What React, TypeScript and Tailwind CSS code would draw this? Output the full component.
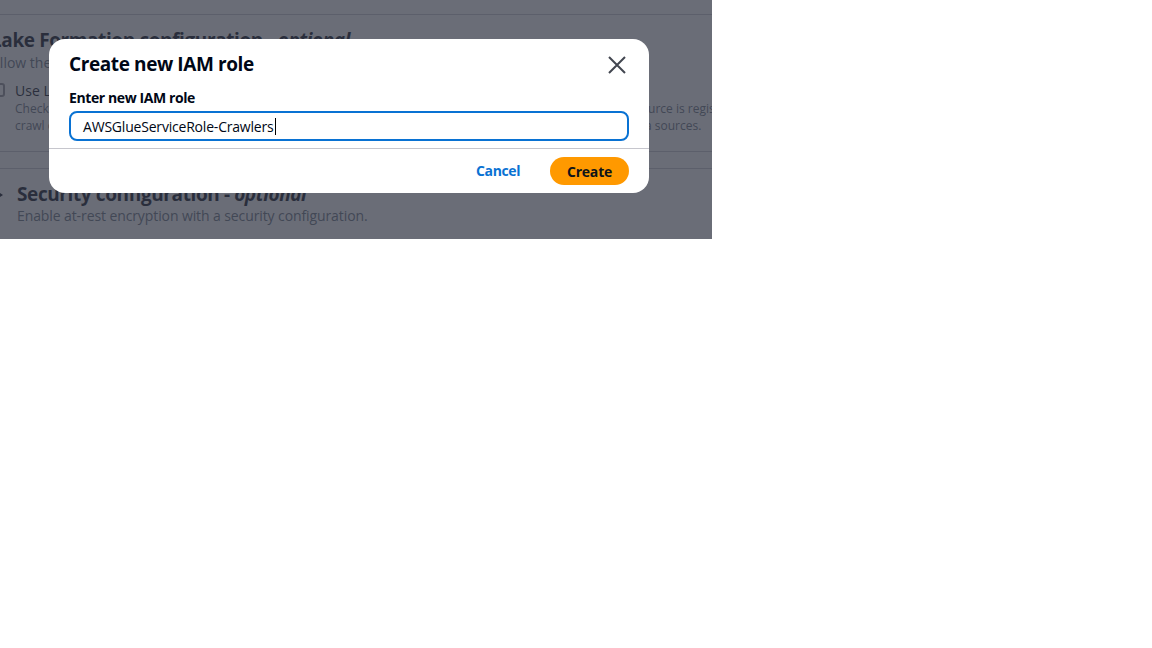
import React from 'react';

// Background page: Glue crawler "security settings" step, partly scrolled
function CrawlerSettings() {
  return (
    <div className="text-[#000716]">
      <div className="h-[15px] border-b border-[#c6c6cd]" />

      {/* Lake Formation */}
      <section className="-ml-[9px] pt-[13px]">
        <h2 className="text-[19px] font-bold leading-[24px] tracking-[-0.4px] whitespace-nowrap">
          Lake Formation configuration - <i className="font-bold">optional</i>
        </h2>
        <p className="mt-[1px] text-[14px] leading-[20px] text-[#5f6b7a] whitespace-nowrap">
          Allow the crawler to use Lake Formation credentials for crawling the data source.
        </p>
        <div className="mt-[9px] flex items-start gap-[10px]">
          <span className="mt-[1px] h-[14px] w-[14px] shrink-0 rounded-[3px] border-2 border-[#8c8c94] bg-white" />
          <div>
            <div className="text-[14px] leading-[18px] whitespace-nowrap">
              Use Lake Formation credentials for crawling S3 data source
            </div>
            <div className="text-[12px] leading-[17px] text-[#5f6b7a] whitespace-nowrap">
              <div>Checking this box allows the crawler to use Lake Formation credentials for crawling the data source. If the data source is registered</div>
              <div>crawl only those data sources associated with the account. You must also have permissions to crawl all of the data sources.</div>
            </div>
          </div>
        </div>
      </section>

      <div className="mt-[17px] border-b border-[#c6c6cd]" />
      <div className="h-[17px] border-b border-[#c6c6cd]" />

      {/* Security configuration */}
      <section className="pt-[13px] flex items-start">
        <span className="-ml-[4px] w-[21px] pt-[8px] shrink-0">
          <svg width="8" height="10" viewBox="0 0 8 10">
            <path d="M1 1 L7 5 L1 9 Z" fill="#000716" />
          </svg>
        </span>
        <div>
          <h2 className="text-[19px] font-bold leading-[24px] tracking-[-0.4px] whitespace-nowrap">
            Security configuration - <i className="font-bold">optional</i>
          </h2>
          <p className="text-[14px] leading-[20px] tracking-[-0.1px] text-[#5f6b7a] whitespace-nowrap">
            Enable at-rest encryption with a security configuration.
          </p>
        </div>
      </section>
    </div>
  );
}

function CreateRoleModal() {
  return (
    <div className="absolute left-[49px] top-[39px] w-[600px] rounded-[16px] bg-white text-[#000716]">
      <div className="px-[20px] pb-[7px]">
        <div className="flex items-start justify-between pt-[13px]">
          <h1 className="text-[19px] font-bold leading-[24px] tracking-[-0.4px]">Create new IAM role</h1>
          <button className="mr-[3px] mt-[4px] h-[18px] w-[18px]" aria-label="Close">
            <svg width="18" height="18" viewBox="0 0 18 18" fill="none">
              <path d="M1 1 L17 17 M17 1 L1 17" stroke="#424650" strokeWidth="2" />
            </svg>
          </button>
        </div>
        <label className="mt-[12px] block text-[14px] font-bold leading-[20px] tracking-[-0.4px]">
          Enter new IAM role
        </label>
        <div className="mt-[3px] flex h-[30px] items-center rounded-[8px] border-2 border-[#0972d3] pl-[12px] text-[14px] tracking-[-0.2px]">
          <span>AWSGlueServiceRole-Crawlers</span>
          <span className="ml-[1px] h-[17px] w-[1px] bg-black" />
        </div>
      </div>
      <div className="flex items-center justify-end gap-[30px] border-t border-[#c6c6cd] px-[20px] py-[8px]">
        <button className="text-[14px] font-bold leading-[20px] tracking-[-0.4px] text-[#0972d3]">Cancel</button>
        <button className="h-[28px] w-[79px] rounded-full bg-[#ff9900] text-[14px] font-bold tracking-[-0.2px] text-[#0f141a]">
          Create
        </button>
      </div>
    </div>
  );
}

export default function App() {
  return (
    <div className="font-['Open_Sans',sans-serif]">
      <div className="relative h-[239px] w-[712px] overflow-hidden bg-white">
        <CrawlerSettings />
        <div className="absolute inset-0 bg-[rgba(56,60,73,0.75)]" />
        <CreateRoleModal />
      </div>
    </div>
  );
}
